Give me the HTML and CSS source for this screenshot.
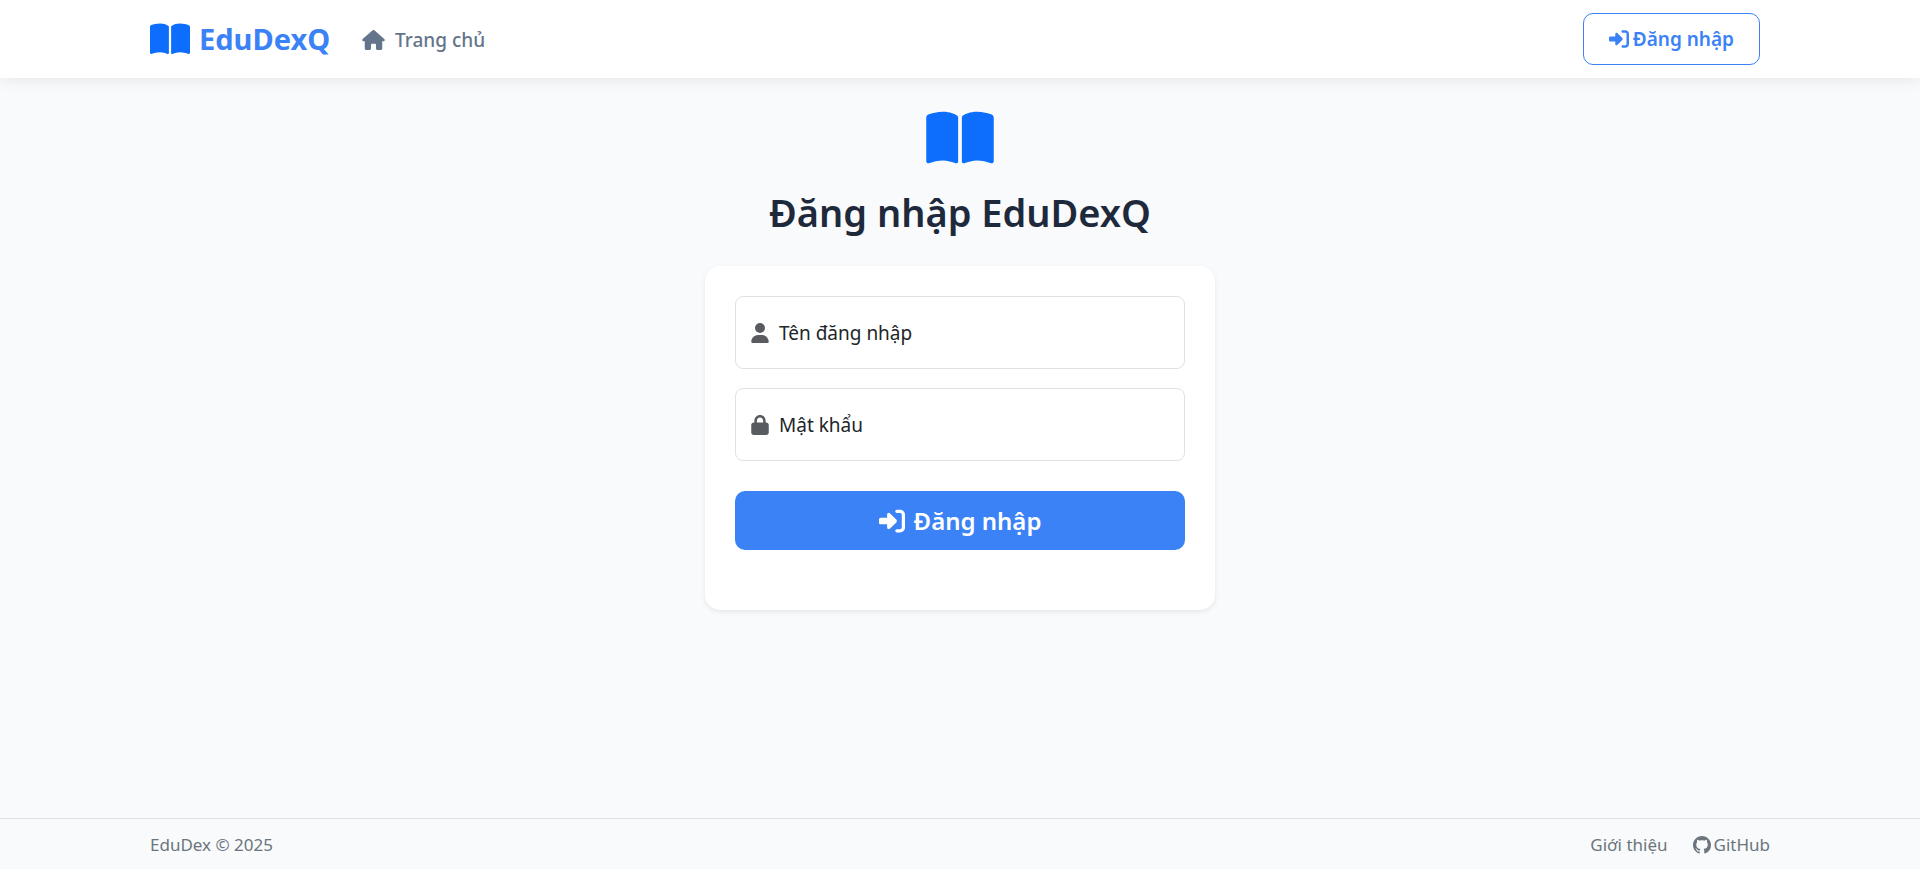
FILE: index.html
```html
<!DOCTYPE html>
<html lang="vi">
<head>
<meta charset="utf-8">
<meta name="viewport" content="width=device-width, initial-scale=1">
<title>Đăng nhập EduDexQ</title>
<link rel="stylesheet" href="styles.css">
</head>
<body>
<svg class="sprite" aria-hidden="true">
  <symbol id="book" viewBox="0 0 576 512"><path d="M249.600 471.500c10.800 3.800 22.400-4.100 22.400-15.500l0-377.400c0-4.200-1.600-8.400-5-11C247.400 52 202.400 32 144 32C93.500 32 46.300 45.300 18.100 56.100C6.800 60.500 0 71.700 0 83.800L0 454.100c0 11.900 12.800 20.200 24.100 16.500C55.600 460.100 105.500 448 144 448c33.900 0 79 14 105.600 23.500zm76.800 0C353 462 398.100 448 432 448c38.500 0 88.400 12.100 119.900 22.600c11.300 3.800 24.100-4.600 24.100-16.500l0-370.300c0-12.100-6.800-23.300-18.100-27.600C529.700 45.300 482.500 32 432 32c-58.400 0-103.400 20-123 35.600c-3.300 2.600-5 6.800-5 11L304 456c0 11.400 11.700 19.300 22.400 15.500z"/></symbol>
  <symbol id="house" viewBox="0 0 576 512"><path d="M575.8 255.5c0 18-15 32.1-32 32.1l-32 0 .7 160.2c0 2.700-.2 5.400-.5 8.100l0 16.200c0 22.100-17.900 40-40 40l-16 0c-1.100 0-2.200 0-3.300-.1c-1.400 .1-2.800 .1-4.200 .1L416 512l-24 0c-22.100 0-40-17.900-40-40l0-24 0-64c0-17.700-14.300-32-32-32l-64 0c-17.700 0-32 14.300-32 32l0 64 0 24c0 22.100-17.900 40-40 40l-24 0-31.900 0c-1.500 0-3-.1-4.500-.2c-1.200 .1-2.400 .2-3.600 .2l-16 0c-22.100 0-40-17.900-40-40l0-112c0-.9 0-1.900 .1-2.800l0-69.700-32 0c-18 0-32-14-32-32.1c0-9 3-17 10-24L266.400 8c7-7 15-8 22-8s15 2 21 7L564.800 231.500c8 7 12 15 11 24z"/></symbol>
  <symbol id="login" viewBox="0 0 512 512"><path d="M217.900 105.900L340.700 228.700c7.200 7.200 11.300 17.100 11.300 27.300s-4.100 20.100-11.300 27.300L217.900 406.100c-6.400 6.400-15 9.900-24 9.900c-18.700 0-33.900-15.200-33.900-33.900l0-62.100L32 320c-17.700 0-32-14.300-32-32l0-64c0-17.700 14.300-32 32-32l128 0 0-62.100c0-18.700 15.200-33.900 33.900-33.900c9 0 17.600 3.600 24 9.900zM352 416l64 0c17.700 0 32-14.300 32-32l0-256c0-17.700-14.300-32-32-32l-64 0c-17.700 0-32-14.300-32-32s14.300-32 32-32l64 0c53 0 96 43 96 96l0 256c0 53-43 96-96 96l-64 0c-17.700 0-32-14.300-32-32s14.300-32 32-32z"/></symbol>
  <symbol id="user" viewBox="0 0 448 512"><path d="M224 256A128 128 0 1 0 224 0a128 128 0 1 0 0 256zm-45.700 48C79.800 304 0 383.800 0 482.300C0 498.700 13.300 512 29.700 512l388.600 0c16.400 0 29.700-13.300 29.700-29.700C448 383.800 368.200 304 269.700 304l-91.400 0z"/></symbol>
  <symbol id="lock" viewBox="0 0 448 512"><path d="M144 144l0 48 160 0 0-48c0-44.200-35.800-80-80-80s-80 35.800-80 80zM80 192l0-48C80 64.500 144.500 0 224 0s144 64.500 144 144l0 48 16 0c35.300 0 64 28.700 64 64l0 192c0 35.300-28.700 64-64 64L64 512c-35.300 0-64-28.700-64-64L0 256c0-35.300 28.700-64 64-64l16 0z"/></symbol>
  <symbol id="github" viewBox="0 0 16 16"><path d="M8 0C3.580 0 0 3.580 0 8c0 3.540 2.290 6.530 5.470 7.590.4.070.55-.17.55-.38 0-.19-.01-.82-.01-1.490-2.010.37-2.530-.49-2.690-.94-.09-.23-.48-.94-.82-1.130-.28-.15-.68-.52-.01-.53.63-.01 1.080.58 1.230.82.72 1.210 1.870.87 2.330.66.070-.52.280-.87.510-1.070-1.780-.2-3.640-.89-3.640-3.950 0-.87.310-1.590.820-2.150-.08-.2-.36-1.020.080-2.120 0 0 .67-.21 2.200.82.640-.18 1.320-.27 2-.27s1.360.09 2 .27c1.530-1.040 2.200-.82 2.200-.82.440 1.100.160 1.920.080 2.120.510.560.820 1.270.820 2.150 0 3.070-1.870 3.750-3.650 3.950.290.250.540.730.540 1.480 0 1.070-.01 1.930-.01 2.200 0 .21.150.460.550.380A8.010 8.010 0 0 0 16 8c0-4.420-3.580-8-8-8"/></symbol>
</svg>

<header class="navbar">
  <div class="container navbar-inner">
    <a class="brand" href="#"><svg class="icon brand-icon"><use href="#book"/></svg><span>EduDexQ</span></a>
    <nav class="nav"><a class="nav-link" href="#"><svg class="icon home-icon"><use href="#house"/></svg><span>Trang chủ</span></a></nav>
    <a class="login-link" href="#"><svg class="icon login-icon"><use href="#login"/></svg><span>Đăng nhập</span></a>
  </div>
</header>

<main class="main">
  <svg class="icon hero-icon"><use href="#book"/></svg>
  <h1 class="title">Đăng nhập EduDexQ</h1>
  <form class="card">
    <div class="field">
      <label class="field-label" for="username"><svg class="icon field-icon"><use href="#user"/></svg><span>Tên đăng nhập</span></label>
      <input class="field-input" id="username" type="text" autocomplete="username">
    </div>
    <div class="field">
      <label class="field-label" for="password"><svg class="icon field-icon"><use href="#lock"/></svg><span>Mật khẩu</span></label>
      <input class="field-input" id="password" type="password" autocomplete="current-password">
    </div>
    <button class="submit" type="submit"><svg class="icon submit-icon"><use href="#login"/></svg><span>Đăng nhập</span></button>
  </form>
</main>

<footer class="footer">
  <div class="container footer-inner">
    <span>EduDex © 2025</span>
    <div class="footer-links">
      <a class="footer-link" href="#">Giới thiệu</a>
      <a class="footer-link" href="#"><svg class="icon github-icon"><use href="#github"/></svg><span>GitHub</span></a>
    </div>
  </div>
</footer>
</body>
</html>
```
FILE: styles.css
```css
*, *::before, *::after { box-sizing: border-box; }

body {
  margin: 0;
  min-height: 100vh;
  display: flex;
  flex-direction: column;
  background: #f8fafc;
  color: #212529;
  font-family: "Segoe UI", "Noto Sans", "Open Sans", sans-serif;
  font-size: 19px;
  line-height: 30px;
}

a { color: inherit; text-decoration: none; }

.sprite { position: absolute; width: 0; height: 0; }
.icon { display: block; flex: none; fill: currentColor; }

.container {
  width: 100%;
  max-width: 1650px;
  margin: 0 auto;
  padding: 0 15px;
}

.navbar {
  background: #fff;
  box-shadow: 0 2px 15px rgba(0, 0, 0, 0.08);
}
.navbar-inner {
  display: flex;
  align-items: center;
  padding-top: 13px;
  padding-bottom: 13px;
}
.brand {
  display: flex;
  align-items: center;
  gap: 9px;
  color: #3b82f6;
  font-size: 29px;
  font-weight: 700;
}
.brand-icon { width: 40px; height: 36px; color: #0d6efd; }
.nav { flex: 1; margin-left: 32px; }
.nav-link {
  display: inline-flex;
  align-items: center;
  gap: 10px;
  color: #64748b;
  font-weight: 500;
  vertical-align: middle;
}
.home-icon { width: 23px; height: 20px; }
.login-link {
  display: flex;
  align-items: center;
  gap: 4px;
  margin-right: 10px;
  padding: 10px 25px;
  border: 1px solid #3b82f6;
  border-radius: 10px;
  color: #3b82f6;
  font-weight: 600;
}
.login-icon { width: 20px; height: 20px; }

.main {
  flex: 1;
  display: flex;
  flex-direction: column;
  align-items: center;
  padding: 30px 15px;
}
.hero-icon { width: 68px; height: 60px; color: #0d6efd; }
.title {
  margin: 20px 0 30px;
  color: #1e293b;
  font-size: 38px;
  font-weight: 600;
  line-height: 48px;
}
.card {
  width: 100%;
  max-width: 510px;
  padding: 30px 30px 60px;
  border-radius: 15px;
  background: #fff;
  box-shadow: 0 2px 5px rgba(0, 0, 0, 0.08);
}
.field {
  display: flex;
  align-items: stretch;
  height: 73px;
  margin-bottom: 19px;
  border: 1px solid #dee2e6;
  border-radius: 8px;
}
.field-label {
  display: flex;
  align-items: center;
  gap: 10px;
  padding-left: 15px;
}
.field-icon { width: 18px; height: 20px; color: #585c60; }
.field-input {
  flex: 1;
  min-width: 0;
  padding: 0 15px;
  border: 0;
  outline: 0;
  background: transparent;
  font: inherit;
}
.submit {
  display: flex;
  align-items: center;
  justify-content: center;
  gap: 9px;
  width: 100%;
  margin-top: 30px;
  padding: 14px 20px;
  border: 0;
  border-radius: 10px;
  background: #3b82f6;
  color: #fff;
  font-family: inherit;
  font-size: 24px;
  font-weight: 600;
  line-height: 31px;
}
.submit-icon { width: 26px; height: 26px; }

.footer {
  border-top: 1px solid #dee2e6;
  color: #6c757d;
  font-size: 17px;
}
.footer-inner {
  display: flex;
  align-items: center;
  justify-content: space-between;
  padding-top: 11px;
  padding-bottom: 9px;
}
.footer-links { display: flex; gap: 25px; }
.footer-link { display: flex; align-items: center; gap: 3px; }
.github-icon { width: 18px; height: 18px; }
```
